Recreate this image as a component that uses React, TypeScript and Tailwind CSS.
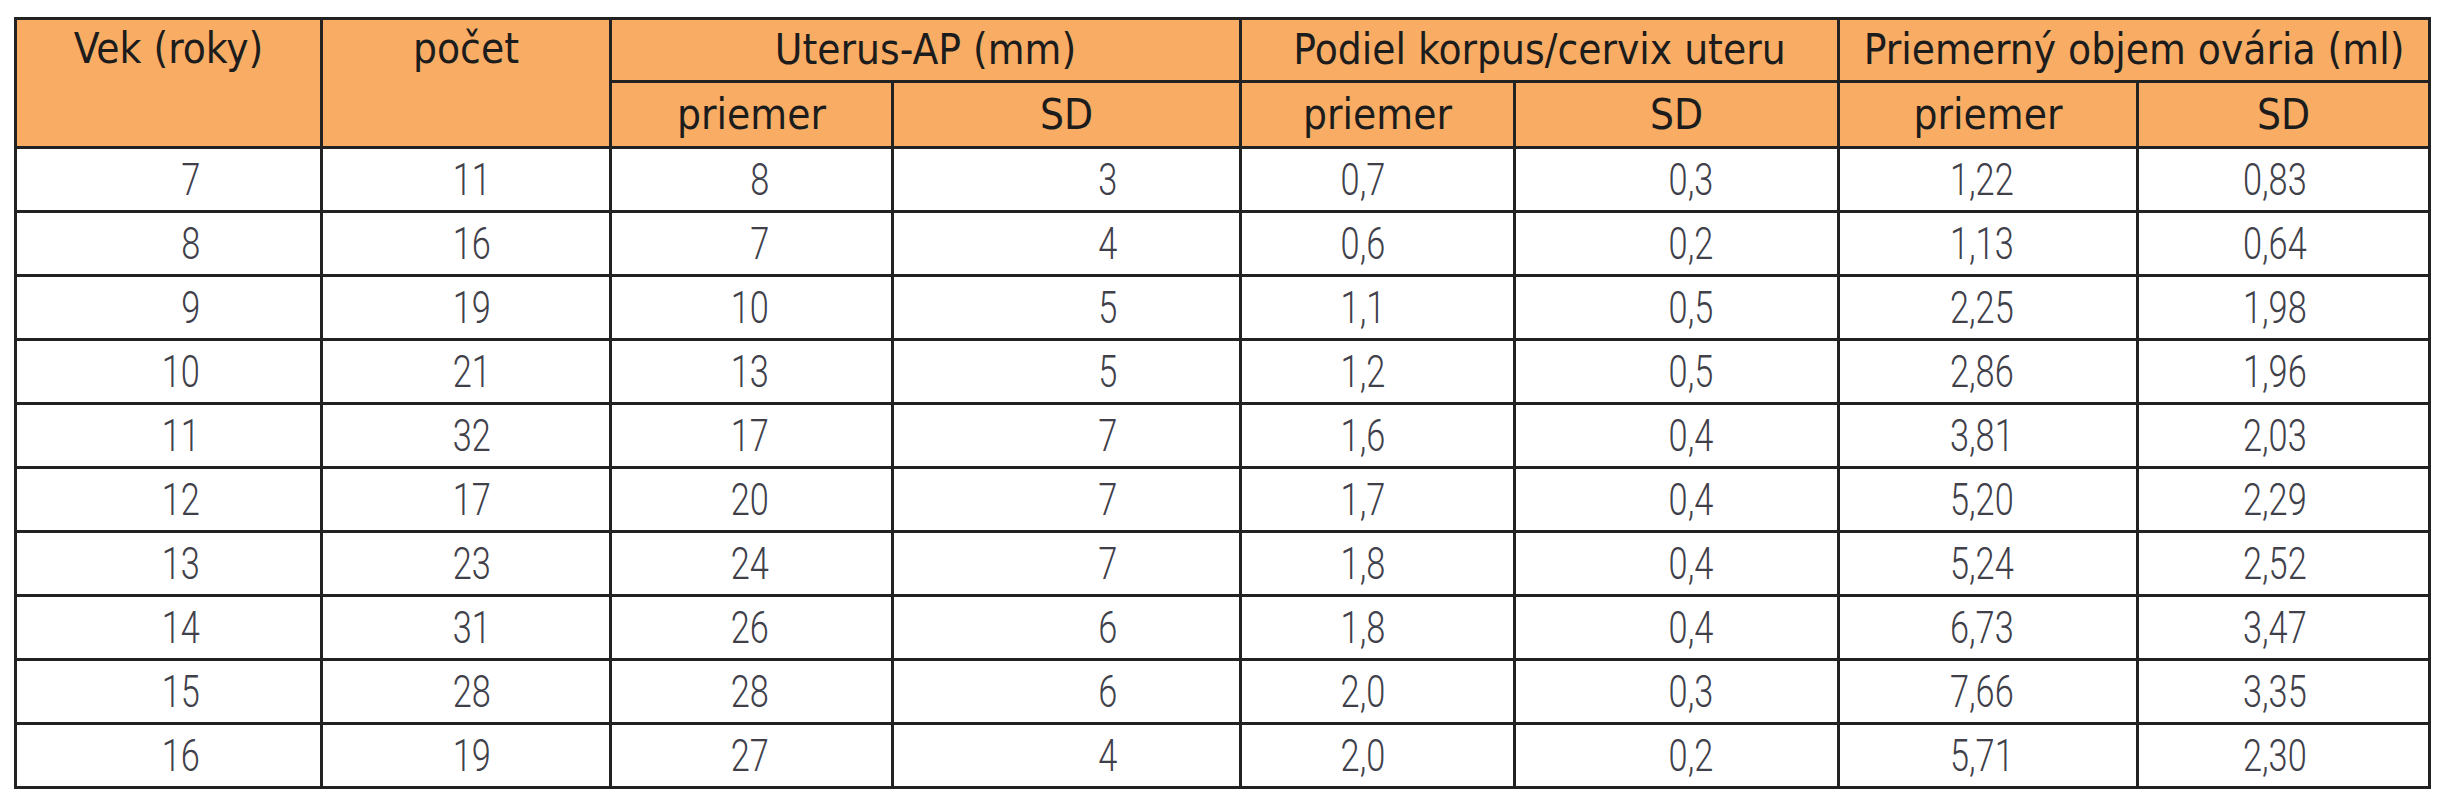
const rows = [
  ["7", "11", "8", "3", "0,7", "0,3", "1,22", "0,83"],
  ["8", "16", "7", "4", "0,6", "0,2", "1,13", "0,64"],
  ["9", "19", "10", "5", "1,1", "0,5", "2,25", "1,98"],
  ["10", "21", "13", "5", "1,2", "0,5", "2,86", "1,96"],
  ["11", "32", "17", "7", "1,6", "0,4", "3,81", "2,03"],
  ["12", "17", "20", "7", "1,7", "0,4", "5,20", "2,29"],
  ["13", "23", "24", "7", "1,8", "0,4", "5,24", "2,52"],
  ["14", "31", "26", "6", "1,8", "0,4", "6,73", "3,47"],
  ["15", "28", "28", "6", "2,0", "0,3", "7,66", "3,35"],
  ["16", "19", "27", "4", "2,0", "0,2", "5,71", "2,30"],
]

// right padding per column, numbers sit right-aligned in each cell
const pads = [
  "pr-[120px]",
  "pr-[118px]",
  "pr-[122px]",
  "pr-[122px]",
  "pr-[128px]",
  "pr-[124px]",
  "pr-[122px]",
  "pr-[121px]",
]

const widths = ["w-[306px]", "w-[289px]", "w-[282px]", "w-[348px]", "w-[274px]", "w-[324px]", "w-[299px]", "w-[292px]"]

const head =
  "border-[3px] border-[#222] bg-[#f8ac64] p-0 text-center font-normal text-[#1c1c1c] leading-[58px]"
const cell = "border-[3px] border-[#222] p-0 h-[64px] leading-none text-right align-middle"

export default function App() {
  return (
    <div className="min-h-screen bg-white pt-[17px] pl-[14px]">
      <table className="table-fixed border-collapse w-[2417px] font-['DejaVu_Sans_Condensed','DejaVu_Sans',sans-serif] text-[42px]">
        <colgroup>
          {widths.map((w, i) => (
            <col key={i} className={w} />
          ))}
        </colgroup>
        <thead>
          <tr className="h-[63px]">
            <th rowSpan={2} className={head + " align-top"}>
              Vek (roky)
            </th>
            <th rowSpan={2} className={head + " align-top"}>
              počet
            </th>
            <th colSpan={2} className={head}>
              Uterus-AP (mm)
            </th>
            <th colSpan={2} className={head}>
              Podiel korpus/cervix uteru
            </th>
            <th colSpan={2} className={head}>
              Priemerný objem ovária (ml)
            </th>
          </tr>
          <tr className="h-[66px]">
            <th className={head}>priemer</th>
            <th className={head}>SD</th>
            <th className={head}>priemer</th>
            <th className={head}>SD</th>
            <th className={head}>priemer</th>
            <th className={head}>SD</th>
          </tr>
        </thead>
        <tbody className="text-[#40404a] text-[44px] font-['Roboto',sans-serif] font-light">
          {rows.map((r, i) => (
            <tr key={i}>
              {r.map((v, j) => (
                <td key={j} className={cell + " " + pads[j]}>
                  <span className="inline-block leading-none origin-right scale-x-[0.78]">{v}</span>
                </td>
              ))}
            </tr>
          ))}
        </tbody>
      </table>
    </div>
  )
}
